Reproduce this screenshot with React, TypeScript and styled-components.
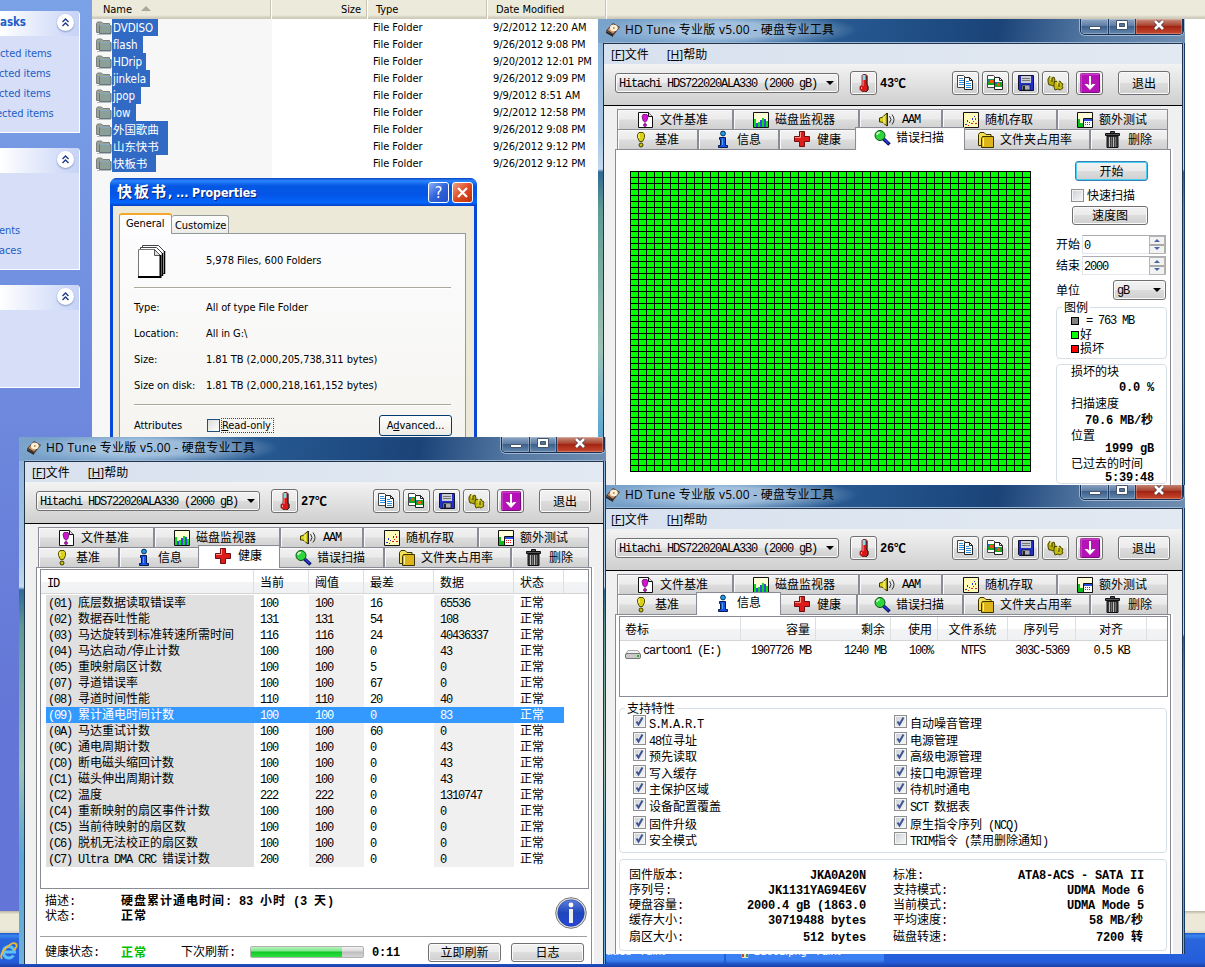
import React from "react";
import styled, { createGlobalStyle, css } from "styled-components";

const XP_FONT = `"DejaVu Sans Condensed", "Noto Sans", "Noto Sans CJK SC", sans-serif`;
const AERO_FONT = `"Open Sans", "Noto Sans CJK SC", sans-serif`;
const SONG_FONT = `"Liberation Mono", "Noto Sans CJK SC", monospace`;
const TAB_BORDER = "#898c95";
const GROUP_BORDER = "#d5dfe5";

const GlobalStyle = createGlobalStyle`
    body {
        margin: 0;
        background: #ffffff;
    }

    * {
        box-sizing: border-box;
    }
`;

const Desktop = styled.div`
    position: relative;
    width: 1205px;
    height: 967px;
    overflow: hidden;
    background: #ffffff;
    font-family: ${XP_FONT};
    font-size: 11px;
    letter-spacing: -0.07px;
    color: #000000;
    white-space: pre;
`;

/* ---------- mixed latin / chinese text ---------- */

const SongText = styled.span<{ $bold?: boolean }>`
    display: inline-block;
    font-family: "Noto Sans CJK SC", sans-serif;
    font-size: 12px;
    font-weight: ${(props) => (props.$bold ? 700 : 400)};
    letter-spacing: ${(props) => (props.$bold ? "1px" : "0")};
    white-space: pre;
    transform: translateY(-1px);
`;

// half-width glyphs take exactly half of a chinese one
const Latin = styled.span<{ $bold?: boolean }>`
    font-family: ${SONG_FONT};
    font-size: 12px;
    letter-spacing: ${(props) => (props.$bold ? "-0.2px" : "-1.2px")};
`;

const Song = ({ text, bold }: { text: string; bold?: boolean }) => (
    <SongText $bold={bold}>
        {text
            .split(/([\x20-\x7e]+)/)
            .filter(Boolean)
            .map((part, i) =>
                /^[\x20-\x7e]/.test(part) ? (
                    <Latin key={i} $bold={bold}>
                        {part}
                    </Latin>
                ) : (
                    <React.Fragment key={i}>{part}</React.Fragment>
                ),
            )}
    </SongText>
);

/* ---------- icons ---------- */

const Icon = styled.svg`
    display: block;
    flex: none;
    overflow: visible;
`;

const DiskIcon = () => (
    <Icon width="14" height="14" viewBox="0 0 14 14">
        <path d="M0 7.500 7 0l7 4-7 9z" fill="#4b3a32" />
        <path d="M1.500 7 7 1l6 3.500-6 6z" fill="#c99465" />
        <ellipse cx="7.800" cy="5" rx="3.800" ry="3.200" fill="#fff0d8" />
        <circle cx="7.800" cy="5" r="1" fill="#c08a58" />
        <path d="M0 8l7 4v2L0 10z" fill="#2e2622" />
    </Icon>
);

const FolderIcon = () => (
    <Icon width="16" height="14" viewBox="0 0 16 14">
        <path d="M.5 11.500v-9l1-1.500h4l1.500 1.500h6.500v9z" fill="#98a394" stroke="#7a8082" />
        <path d="M3.500 4.500h11.500v8h-11.500z" fill="#8c9f98" stroke="#64757f" />
        <path d="M4 4.500h10" stroke="#84a9c9" />
        <path d="M1 13.500h14" stroke="#b9bcc0" />
    </Icon>
);

const ThermoIcon = () => (
    <Icon width="10" height="18" viewBox="0 0 10 18">
        <path d="M3 1.500 4 .5h3l1 1v10l1 1v3l-2 2h-4l-2-2v-3l2-1z" fill="#d91818" stroke="#5a0909" strokeWidth=".7" />
        <path d="M3.500 1h3v5h-3z" fill="#7fe0ea" />
        <path d="M2.500 13v2M4 6v6" stroke="#ff9a9a" />
        <path d="M8 2v9l1 1v4l-2 2" fill="none" stroke="#222" />
    </Icon>
);

const CopyIcon = ({ color }: { color?: boolean }) => (
    <Icon width="17" height="16" viewBox="0 0 17 16">
        <path d="M.5.500h6l2 2v10h-8z" fill="#fff" stroke="#444" />
        <path d="M7.500 2.500h5l3 3v9h-8z" fill="#fff" stroke="#222" />
        <path d="M12.500 2.500v3h3" fill="none" stroke="#222" />
        {color ? (
            <>
                <path d="M1 4h6v6h-6zM8 7h7v5h-7z" fill="#12a422" />
                <path d="M3 5h3v3h-3zM10 8h3v3h-3z" fill="#f05a10" />
                <path d="M1 4h2v2h-2zM8 7h2v2h-2z" fill="#1d70d0" />
            </>
        ) : (
            <path d="M2 3.500h4M2 5.500h5M2 7.500h5M2 9.500h5M9 6.500h3M9 8.500h5M9 10.500h5M9 12.500h5" stroke="#2c8ede" />
        )}
    </Icon>
);

const SaveIcon = () => (
    <Icon width="16" height="16" viewBox="0 0 16 16">
        <path d="M.5.5h15v15h-14l-1-1z" fill="#2330d0" stroke="#111130" />
        <path d="M3 1h10v7h-10z" fill="#c9ccd2" />
        <path d="M4 3.500h8M4 5.500h8" stroke="#777" />
        <path d="M4 10h8v5h-8z" fill="#a9acb8" stroke="#111" strokeWidth=".7" />
        <path d="M5 11h2v4h-2z" fill="#222" />
    </Icon>
);

const GearsIcon = () => (
    <Icon width="17" height="16" viewBox="0 0 17 16">
        <path d="M1 4 3 1l2 2 2-1 1 3-1 3 2 1-3 2-2-1-2 0-1-3z" fill="#b5ad08" stroke="#4b4700" />
        <path d="M7 8l2-2 2 1 2-1 1 2 2 1-1 2 1 2-3 2-2-1-3 1-1-3z" fill="#c6bd12" stroke="#4b4700" />
        <path d="M4 1v4M11 6v4" stroke="#eee67a" strokeWidth="1.500" />
        <path d="M5 3v4M12 8v4" stroke="#3c3900" />
    </Icon>
);

const DownIcon = () => (
    <Icon width="20" height="20" viewBox="0 0 20 20">
        <rect x=".5" y=".5" width="19" height="19" rx="1" fill="#b512b5" stroke="#7a0b7d" />
        <path d="M1 19V1h18" fill="none" stroke="#dd62dd" />
        <path d="M10 3v11" stroke="#fff" strokeWidth="2" />
        <path d="M4.500 11h3l2.500 2 2.500-2h3l-5.500 6z" fill="#fff" />
    </Icon>
);

const BangIcon = () => (
    <Icon width="10" height="17" viewBox="0 0 10 17">
        <path d="M3 1.500h4l1.500 2v3l-2 4h-3l-2-4v-3z" fill="#d9d216" stroke="#545000" />
        <circle cx="5" cy="14" r="2" fill="#c9c20e" stroke="#3c3a00" />
        <path d="M3 3v4" stroke="#fffbb0" />
    </Icon>
);

const FileBangIcon = () => (
    <Icon width="15" height="16" viewBox="0 0 15 16">
        <path d="M.5.5h10l4 4v11h-14z" fill="#fff" stroke="#111" />
        <path d="M10.500.5v4h4" fill="#ddd" stroke="#111" />
        <path d="M5 2.500h4l1 2-1 4-2 2-2-2-1-4z" fill="#d414d4" stroke="#500050" strokeWidth=".7" />
        <circle cx="7" cy="13" r="1.500" fill="#d414d4" stroke="#500050" strokeWidth=".7" />
    </Icon>
);

const ChartIcon = () => (
    <Icon width="17" height="16" viewBox="0 0 17 16">
        <path d="M.5.5h15v15h-15z" fill="#ffffd8" stroke="#111" />
        <path d="M1 7h2v8h-2zM5 10h2v5h-2zM9 6h2v9h-2zM13 9h2v6h-2z" fill="#0bdc1a" />
        <path d="M3 11h2v4h-2zM7 8h2v7h-2zM11 7h2v8h-2z" fill="#3b46e0" />
    </Icon>
);

const SpeakerIcon = () => (
    <Icon width="17" height="16" viewBox="0 0 17 16">
        <path d="M.5 6 3 5.500 8 1v13l-5-4L.5 10z" fill="#dcd41a" stroke="#3c3a00" />
        <path d="M5 4v8" stroke="#fff9a0" />
        <path d="M8.500 1v13" stroke="#222" />
        <path d="M10.500 4q3 3.500 0 7M13 2.500q4 5 0 10" fill="none" stroke="#333" />
    </Icon>
);

const ScatterIcon = () => (
    <Icon width="17" height="16" viewBox="0 0 17 16">
        <path d="M.5.5h15v15h-15z" fill="#fffbb8" stroke="#111" />
        <path d="M2 12h2v1h-2zM4 8h1v2h-1zM6 10h1v1h-1zM9 6h1v2h-1zM11 4h1v1h-1z" fill="#2a35e0" />
        <path d="M5 13h1v1h-1zM8 11h2v1h-2zM10 9h1v1h-1zM12 6h1v2h-1zM12 11h2v1h-2z" fill="#e02020" />
    </Icon>
);

const ExtraIcon = () => (
    <Icon width="17" height="16" viewBox="0 0 17 16">
        <path d="M.5.5h15v15h-15z" fill="#ffffd8" stroke="#111" />
        <path d="M1 7h2v8h-2zM3 11h3v4h-3z" fill="#0bbc1a" />
        <path d="M6.500 6.500h9v9h-9z" fill="#fff" stroke="#111" />
        <path d="M7 7h8v2h-8z" fill="#2b4fe0" />
        <path d="M8 10h1v1h-1zM10 10h1v1h-1zM12 10h1v1h-1zM8 12h1v1h-1zM10 12h1v1h-1zM12 12h1v1h-1z" fill="#e02020" />
    </Icon>
);

const InfoIcon = () => (
    <Icon width="12" height="17" viewBox="0 0 12 17">
        <circle cx="6" cy="2.500" r="2.400" fill="#1b9bf0" stroke="#08304f" />
        <path d="M2.500 6.500h6v8h2v2h-9v-2h2v-6h-1z" fill="#1653e8" stroke="#071a50" />
        <path d="M5.500 8v6" stroke="#47a3ff" />
    </Icon>
);

const CrossIcon = () => (
    <Icon width="17" height="17" viewBox="0 0 17 17">
        <path d="M5.500.5h5v5h5v5h-5v5h-5v-5h-5v-5h5z" fill="#e01b1b" stroke="#6b1010" />
        <path d="M6.500 1v5.500h-5.500" fill="none" stroke="#ff9a8a" />
    </Icon>
);

const LensIcon = () => (
    <Icon width="17" height="16" viewBox="0 0 17 16">
        <path d="M9 8.500l6.500 6" stroke="#0b1470" strokeWidth="3.600" />
        <path d="M9 8l5.500 5.500" stroke="#2e44e0" strokeWidth="1.200" />
        <circle cx="6" cy="5.500" r="5" fill="#2fd53c" stroke="#0a4d10" />
        <path d="M3 5q0-2.500 3-2.500" stroke="#d0ffd0" strokeWidth="1.500" fill="none" />
    </Icon>
);

const YellowFolderIcon = () => (
    <Icon width="16" height="16" viewBox="0 0 16 16">
        <path d="M.5 13.500v-11l1.500-2h4l2 2h5v11z" fill="#f2e056" stroke="#3c3200" />
        <path d="M4.500 4.500h11v11h-12v-9z" fill="#dcb41c" stroke="#3c3200" />
        <path d="M5.500 6v8" stroke="#fff2a0" />
    </Icon>
);

const TrashIcon = () => (
    <Icon width="15" height="17" viewBox="0 0 15 17">
        <path d="M5.500.5h4v2h-4zM.5 2.500h14v2h-14z" fill="#555" stroke="#111" />
        <path d="M2 5h11v11.500h-11z" fill="#3d3d3d" stroke="#111" />
        <path d="M4.500 6v10M8.500 6v10" stroke="#bfbfbf" />
        <path d="M6.500 6v10M10.500 6v10" stroke="#777" />
    </Icon>
);

const DriveIcon = () => (
    <Icon width="16" height="9" viewBox="0 0 16 9">
        <path d="M3 .5h10l2.500 4h-15z" fill="#f1f1f1" stroke="#aaa" />
        <rect x=".5" y="3.500" width="15" height="5" rx="1.500" fill="#c9c9c9" stroke="#777" />
        <path d="M12 5h2v2h-2z" fill="#19b52a" />
    </Icon>
);

const PagesIcon = () => (
    <Icon width="28" height="33" viewBox="0 0 28 33">
        <path d="M4.500.5h16l6 6v22h-22z" fill="#fff" stroke="#444" />
        <path d="M26.500 6v23" stroke="#000" strokeWidth="1.500" />
        <path d="M2.500 2.500h16l6 6v22h-22z" fill="#fff" stroke="#444" />
        <path d="M24.500 8v23" stroke="#000" strokeWidth="1.500" />
        <path d="M.5 4.500h16l6 6v21h-22z" fill="#fff" stroke="#777" />
        <path d="M16.500 4.500v6h6z" fill="#ddd" stroke="#555" />
        <path d="M0 32h22.500v-22" fill="none" stroke="#000" strokeWidth="2" />
    </Icon>
);

const BigInfoIcon = () => (
    <Icon width="32" height="32" viewBox="0 0 32 32">
        <defs>
            <linearGradient id="bigInfo" x1="0" y1="0" x2="0" y2="1">
                <stop offset="0" stopColor="#5c7fdc" />
                <stop offset=".5" stopColor="#1e46bb" />
                <stop offset="1" stopColor="#2747d8" />
            </linearGradient>
        </defs>
        <circle cx="16" cy="16" r="15.300" fill="#e4e4e4" stroke="#777" />
        <circle cx="16" cy="16" r="13.300" fill="url(#bigInfo)" stroke="#1e3c9a" strokeWidth=".6" />
        <circle cx="16" cy="8" r="2.400" fill="#fff" />
        <path d="M14 12h4v14h-4z" fill="#eeeeee" />
    </Icon>
);

const IeIcon = () => (
    <Icon width="18" height="17" viewBox="0 0 18 17">
        <path d="M3 9h11.500a5.700 5.700 0 1 0-1 3.500" fill="none" stroke="#5cc2f8" strokeWidth="3" />
        <path d="M2 16Q-1 12 6 5T16 1q2 2-2 6" fill="none" stroke="#f0b92e" strokeWidth="1.800" />
    </Icon>
);

/* ---------- explorer ---------- */

const Sidebar = styled.aside`
    position: absolute;
    left: 0;
    top: 0;
    width: 92px;
    height: 911px;
    padding-top: 11px;
    display: flex;
    flex-direction: column;
    gap: 15px;
    background: linear-gradient(#7ba2e7, #6375d6 80%);
`;

const TaskPanel = styled.section<{ $height: number }>`
    width: 80px;
    height: ${(props) => props.$height}px;
    background: #d6dff7;
    border-right: 1px solid #ffffff;
    border-bottom: 1px solid #ffffff;
    border-top-right-radius: 4px;
    overflow: hidden;
`;

const TaskHeader = styled.header`
    height: 25px;
    display: flex;
    align-items: center;
    justify-content: space-between;
    padding: 0 5px 2px 0;
    background: linear-gradient(90deg, #ffffff, #c6d3f7);
    color: #215dc6;
    font-weight: 700;
    font-size: 11.500px;
    line-height: 27px;
`;

const Chevron = styled.span`
    width: 17px;
    height: 17px;
    border-radius: 50%;
    background: #ffffff;
    box-shadow: 0 1px 2px #8797c4;
    display: flex;
    align-items: center;
    justify-content: center;
`;

const TaskLinks = styled.div<{ $top: number }>`
    padding-top: ${(props) => props.$top}px;
    display: flex;
    flex-direction: column;
    color: #215dc6;
    line-height: 20px;
`;

const TaskLink = styled.span<{ $shift?: number }>`
    margin-left: ${(props) => props.$shift ?? 0}px;
`;

const FileList = styled.main`
    margin-left: 92px;
    height: 911px;
`;

const ColumnHeader = styled.div`
    display: flex;
    height: 19px;
    background: linear-gradient(#ebeadb 80%, #d6d2c2 90%, #cbc7b8);
    line-height: 19px;
`;

const HeaderCell = styled.div<{ $w: number; $right?: boolean; $pad?: number }>`
    width: ${(props) => props.$w}px;
    padding: 0 6px 0 ${(props) => props.$pad ?? 8}px;
    text-align: ${(props) => (props.$right ? "right" : "left")};
    border-right: 1px solid #ffffff;
    box-shadow: inset -1px 0 0 #c7c5b2;
`;

const SortArrow = styled.i`
    display: inline-block;
    margin: 0 0 2px 9px;
    border: 5px solid transparent;
    border-top: 0;
    border-bottom-color: #aca899;
`;

const SortedArea = styled.div`
    height: 420px;
    width: 100%;
    background: linear-gradient(90deg, #f7f7f7 180px, #ffffff 180px);
`;

const FileRow = styled.div`
    display: grid;
    grid-template-columns: 16px 261px 120px auto;
    height: 17px;
    line-height: 18px;
    padding-left: 4px;
`;

const FileName = styled.span<{ $w: number }>`
    width: ${(props) => props.$w}px;
    height: 17px;
    padding-left: 1px;
    background: #316ac5;
    color: #ffffff;
    font-size: 11.500px;
    overflow: hidden;
`;

const FolderSlot = styled.span`
    padding-top: 2px;
`;

const files = [
    { name: "DVDISO", w: 46, date: "9/2/2012 12:20 AM" },
    { name: "flash", w: 31, date: "9/26/2012 9:08 PM" },
    { name: "HDrip", w: 34, date: "9/20/2012 12:01 PM" },
    { name: "jinkela", w: 38, date: "9/26/2012 9:09 PM" },
    { name: "jpop", w: 29, date: "9/9/2012 8:51 AM" },
    { name: "low", w: 24, date: "9/2/2012 12:58 PM" },
    { name: "外国歌曲", w: 56, date: "9/26/2012 9:08 PM" },
    { name: "山东快书", w: 56, date: "9/26/2012 9:12 PM" },
    { name: "快板书", w: 44, date: "9/26/2012 9:12 PM" },
];

const ChevronMark = () => (
    <Chevron>
        <Icon width="9" height="9" viewBox="0 0 9 9">
            <path d="M1.500 4 4.500 1l3 3M1.500 8l3-3 3 3" fill="none" stroke="#1b3a8c" strokeWidth="1.400" />
        </Icon>
    </Chevron>
);

const Explorer = () => (
    <>
        <Sidebar>
            <TaskPanel $height={122}>
                <TaskHeader>
                    <span>asks</span>
                    <ChevronMark />
                </TaskHeader>
                <TaskLinks $top={8}>
                    <TaskLink>cted items</TaskLink>
                    <TaskLink $shift={-1}>cted items</TaskLink>
                    <TaskLink $shift={-1}>cted items</TaskLink>
                    <TaskLink $shift={-4}>ected items</TaskLink>
                </TaskLinks>
            </TaskPanel>
            <TaskPanel $height={122}>
                <TaskHeader>
                    <span />
                    <ChevronMark />
                </TaskHeader>
                <TaskLinks $top={48}>
                    <TaskLink $shift={-1}>ents</TaskLink>
                    <TaskLink $shift={-1}>aces</TaskLink>
                </TaskLinks>
            </TaskPanel>
            <TaskPanel $height={103}>
                <TaskHeader>
                    <span />
                    <ChevronMark />
                </TaskHeader>
            </TaskPanel>
        </Sidebar>
        <FileList>
            <ColumnHeader>
                <HeaderCell $w={180} $pad={11}>
                    Name
                    <SortArrow />
                </HeaderCell>
                <HeaderCell $w={96} $right>
                    Size
                </HeaderCell>
                <HeaderCell $w={120}>Type</HeaderCell>
                <HeaderCell $w={119}>Date Modified</HeaderCell>
            </ColumnHeader>
            <SortedArea>
                {files.map((file) => (
                    <FileRow key={file.name}>
                        <FolderSlot>
                            <FolderIcon />
                        </FolderSlot>
                        <FileName $w={file.w}>{file.name}</FileName>
                        <span>File Folder</span>
                        <span>{file.date}</span>
                    </FileRow>
                ))}
            </SortedArea>
        </FileList>
    </>
);

/* ---------- properties dialog ---------- */

const Dialog = styled.section`
    position: absolute;
    left: 110px;
    top: 178px;
    width: 367px;
    height: 280px;
    padding: 0 3px;
    background: #0a49d8;
    border-radius: 7px 7px 0 0;
    overflow: hidden;
`;

const DialogTitle = styled.header`
    height: 28px;
    margin: 0 -3px;
    padding: 0 4px 0 7px;
    display: flex;
    align-items: center;
    gap: 3px;
    background: linear-gradient(#0a45c0, #2b84ff 10%, #0458e2 28%, #0455e8 60%, #0566fb 88%, #0340c4);
    color: #ffffff;
    font-family: "DejaVu Sans Condensed", "Noto Sans CJK SC", sans-serif;
    font-size: 12.300px;
    font-weight: 700;
    text-shadow: 1px 1px 0 #0a1f6b;
`;

const DialogName = styled.span`
    flex: 1;
    line-height: 26px;
`;

const DialogCjk = styled.span`
    font-size: 15px;
    letter-spacing: 2px;
`;

const XpButton = styled.span<{ $close?: boolean }>`
    width: 21px;
    height: 21px;
    border: 1px solid #ffffff;
    border-radius: 3px;
    background: ${(props) =>
        props.$close ? "linear-gradient(135deg, #f0a088, #e04a22 50%, #b8310c)" : "linear-gradient(135deg, #8cb0f8, #2f62dc 50%, #2450c8)"};
    font-size: 16px;
    font-weight: 400;
    line-height: 19px;
    text-shadow: none;
    display: flex;
    justify-content: center;
    align-items: center;
`;

const DialogBody = styled.div`
    height: 260px;
    padding: 7px 8px 0 6px;
    background: #ece9d8;
`;

const DialogTabs = styled.div`
    display: flex;
    align-items: flex-end;
    height: 20px;
`;

const DialogTab = styled.div<{ $active?: boolean }>`
    border: 1px solid #919b9c;
    border-bottom: 0;
    border-radius: 3px 3px 0 0;
    ${(props) =>
        props.$active
            ? css`
                  width: 53px;
                  height: 21px;
                  margin-bottom: -1px;
                  z-index: 1;
                  border-top: 2px solid #f5a72b;
                  background: #fdfdfe;
                  line-height: 18px;
                  padding-left: 6px;
              `
            : css`
                  width: 57px;
                  height: 18px;
                  background: linear-gradient(#ffffff, #ecebe6);
                  line-height: 19px;
                  padding-left: 3px;
                  border-left: 0;
              `}
`;

const DialogPage = styled.div`
    height: 240px;
    padding: 11px 14px 0 14px;
    border: 1px solid #919b9c;
    background: linear-gradient(#fcfcfe, #f4f3ee);
`;

const SummaryRow = styled.div`
    display: flex;
    align-items: center;
    height: 42px;
    padding: 0 0 10px 4px;
`;

const SummaryText = styled.span`
    margin-left: 40px;
    line-height: 26px;
`;

const Separator = styled.div`
    height: 2px;
    border-top: 1px solid #aca899;
    border-bottom: 1px solid #ffffff;
`;

const PropRow = styled.div`
    display: grid;
    grid-template-columns: 72px auto;
    line-height: 26px;
`;

const PropTable = styled.div`
    padding: 6px 0 5px;
`;

const AttributeRow = styled.div`
    display: flex;
    align-items: center;
    height: 38px;
`;

const XpCheck = styled.span`
    width: 13px;
    height: 13px;
    margin-right: 2px;
    border: 1px solid #1c5180;
    background: linear-gradient(135deg, #dcdcd7, #ffffff);
`;

const AttributeLabel = styled.span`
    width: 73px;
`;

const FocusText = styled.span`
    width: 51px;
    line-height: 13px;
    outline: 1px dotted #444444;
`;

const AdvancedButton = styled.span`
    margin-left: auto;
    margin-right: -1px;
    width: 73px;
    height: 21px;
    border: 1px solid #003c74;
    border-radius: 3px;
    background: linear-gradient(#ffffff, #ecebe6);
    text-align: center;
    line-height: 19px;
`;

const PropertiesDialog = () => (
    <Dialog>
        <DialogTitle>
            <DialogName>
                <DialogCjk>快板书</DialogCjk>, ... Properties
            </DialogName>
            <XpButton>?</XpButton>
            <XpButton $close>
                <Icon width="11" height="11" viewBox="0 0 11 11">
                    <path d="M1 1l9 9M10 1l-9 9" stroke="#fff" strokeWidth="2.200" />
                </Icon>
            </XpButton>
        </DialogTitle>
        <DialogBody>
            <DialogTabs>
                <DialogTab $active>General</DialogTab>
                <DialogTab>Customize</DialogTab>
            </DialogTabs>
            <DialogPage>
                <SummaryRow>
                    <PagesIcon />
                    <SummaryText>5,978 Files, 600 Folders</SummaryText>
                </SummaryRow>
                <Separator />
                <PropTable>
                    <PropRow>
                        <span>Type:</span>
                        <span>All of type File Folder</span>
                    </PropRow>
                    <PropRow>
                        <span>Location:</span>
                        <span>All in G:\</span>
                    </PropRow>
                    <PropRow>
                        <span>Size:</span>
                        <span>1.81 TB (2,000,205,738,311 bytes)</span>
                    </PropRow>
                    <PropRow>
                        <span>Size on disk:</span>
                        <span>1.81 TB (2,000,218,161,152 bytes)</span>
                    </PropRow>
                </PropTable>
                <Separator />
                <AttributeRow>
                    <AttributeLabel>Attributes</AttributeLabel>
                    <XpCheck />
                    <FocusText>
                        <u>R</u>ead-only
                    </FocusText>
                    <AdvancedButton>
                        A<u>d</u>vanced...
                    </AdvancedButton>
                </AttributeRow>
            </DialogPage>
        </DialogBody>
    </Dialog>
);

/* ---------- HD Tune window chrome ---------- */

const Frame = styled.section<{ $x: number; $y: number; $h: number }>`
    position: absolute;
    left: ${(props) => props.$x}px;
    top: ${(props) => props.$y}px;
    width: 587px;
    height: ${(props) => props.$h}px;
    padding: 0 3px 0 6px;
    overflow: hidden;
    background: linear-gradient(#8fb6da 24px, #a9c8e6 120px, #c3d9ee 150px, #2f6a94 153px, #5f9a94 190px, #9cc3b4 330px, #5aa6d4 420px, #6fb0d8);
    box-shadow: inset -1px 0 0 #123a6b;
`;

const TitleBar = styled.header`
    display: flex;
    height: 24px;
    margin: 0 -3px 0 -6px;
    padding-left: 8px;
    background:
        radial-gradient(ellipse 130px 18px at 130px 11px, rgba(190, 214, 236, 0.75) 40%, transparent),
        linear-gradient(100deg, #7ba4cb, #5c8cbd 20%, #2c6199 30%, #1d4a80 60%, #1b4378 68%, #567aa4 84%, #6f8db0);
    font-family: ${AERO_FONT};
    font-size: 12px;
    letter-spacing: 0.25px;
    line-height: 22px;
`;

const TitleIcon = styled.span`
    width: 19px;
    padding-top: 4px;
`;

const TitleText = styled.span`
    flex: 1;
`;

const CaptionButtons = styled.div`
    display: flex;
    width: 104px;
    height: 16px;
    margin-right: 1px;
    border: 1px solid #172f52;
    border-top: 0;
    border-radius: 0 0 5px 5px;
    overflow: hidden;
    box-shadow: 0 0 0 1px rgba(210, 225, 240, 0.6);
`;

const CaptionButton = styled.span<{ $w: number; $close?: boolean }>`
    width: ${(props) => props.$w}px;
    display: flex;
    justify-content: center;
    padding-top: 1px;
    border-right: 1px solid #1f3a60;
    background: ${(props) =>
        props.$close ? "linear-gradient(#c9907f, #a8402c 45%, #a32412 50%, #c84a30)" : "linear-gradient(#8ea6c2, #5f7ea5 45%, #3d608d 50%, #6488ad)"};
    box-shadow: inset 0 0 0 1px rgba(255, 255, 255, 0.25);
`;

const Client = styled.div`
    border-top: 1px solid #22344c;
    box-shadow: -1px 0 0 #22344c, 1px 0 0 #22344c, 0 -1px 0 #9db8d4;
    background: #f0f0f0;
`;

const MenuBar = styled.nav`
    display: flex;
    gap: 18px;
    height: 20px;
    padding-left: 7px;
    background: linear-gradient(90deg, #d8e1ee, #e2e9f2);
    font-family: ${AERO_FONT};
    font-size: 12px;
    line-height: 21px;
`;

const ToolBar = styled.div`
    display: flex;
    height: 42px;
    padding: 7px 12px 0 11px;
    background: linear-gradient(#f3f3f3, #cfcfcf);
    border-bottom: 1px solid #000000;
`;

const buttonFace = css`
    border: 1px solid #707070;
    border-radius: 3px;
    background: linear-gradient(#f2f2f2, #ebebeb 48%, #dddddd 50%, #cfcfcf);
    box-shadow: inset 0 0 0 1px #fbfbfb;
`;

const Combo = styled.span<{ $w: number }>`
    ${buttonFace}
    display: flex;
    justify-content: space-between;
    align-items: center;
    width: ${(props) => props.$w}px;
    height: 20px;
    padding: 0 4px 0 3px;
`;

const DiskCombo = styled(Combo)`
    margin: 2px 11px 0 0;
`;

const Arrow = styled.i`
    border: 4px solid transparent;
    border-top-color: #000000;
    border-bottom: 0;
`;

const ToolButton = styled.span<{ $w?: number; $gap?: number }>`
    ${buttonFace}
    width: ${(props) => props.$w ?? 27}px;
    height: 24px;
    margin-right: ${(props) => props.$gap ?? 3}px;
    display: flex;
    align-items: center;
    justify-content: center;
`;

const Temperature = styled.span`
    flex: 1;
    line-height: 24px;
`;

const TempUnit = styled.b`
    font-family: "Noto Sans CJK SC", sans-serif;
    font-size: 12px;
    line-height: 20px;
    letter-spacing: 0;
`;

const TabRow = styled.div`
    display: flex;
    height: 20px;
    padding-left: 13px;
`;

const TabArea = styled.div`
    padding-top: 3px;
`;

const TabBox = styled.div<{ $w: number; $pad: number; $active?: boolean }>`
    display: flex;
    align-items: center;
    width: ${(props) => props.$w}px;
    height: 20px;
    padding-left: ${(props) => props.$pad}px;
    border: 1px solid ${TAB_BORDER};
    border-width: 1px 1px 0 1px;
    background: linear-gradient(#f2f2f2, #ebebeb 48%, #dddddd 52%, #d0d0d0);
    box-shadow: inset 1px 1px 0 #fafafa;
    line-height: 20px;
    ${(props) =>
        props.$active &&
        css`
            width: ${props.$w + 4}px;
            height: 23px;
            margin: -2px -2px 0 -2px;
            padding-left: ${props.$pad + 2}px;
            padding-bottom: 2px;
            background: #ffffff;
            z-index: 2;
        `}
`;

const TabIconSlot = styled.span<{ $w: number }>`
    width: ${(props) => props.$w}px;
    flex: none;
`;

const Page = styled.div<{ $h: number }>`
    width: 556px;
    height: ${(props) => props.$h}px;
    margin-left: 11px;
    border: 1px solid ${TAB_BORDER};
    border-bottom: 0;
    background: #ffffff;
    box-shadow: 2px 0 0 #ffffff;
`;

type TabDef = { id: string; label: string; w: number; pad: number; slot: number; icon: React.ReactNode };

const topTabs: TabDef[] = [
    { id: "fileBench", label: "文件基准", w: 116, pad: 20, slot: 22, icon: <FileBangIcon /> },
    { id: "monitor", label: "磁盘监视器", w: 126, pad: 19, slot: 22, icon: <ChartIcon /> },
    { id: "aam", label: "AAM", w: 83, pad: 19, slot: 23, icon: <SpeakerIcon /> },
    { id: "random", label: "随机存取", w: 115, pad: 20, slot: 22, icon: <ScatterIcon /> },
    { id: "extra", label: "额外测试", w: 111, pad: 19, slot: 22, icon: <ExtraIcon /> },
];

const bottomTabs: TabDef[] = [
    { id: "bench", label: "基准", w: 81, pad: 18, slot: 19, icon: <BangIcon /> },
    { id: "info", label: "信息", w: 81, pad: 18, slot: 20, icon: <InfoIcon /> },
    { id: "health", label: "健康", w: 78, pad: 14, slot: 23, icon: <CrossIcon /> },
    { id: "scan", label: "错误扫描", w: 106, pad: 16, slot: 22, icon: <LensIcon /> },
    { id: "folders", label: "文件夹占用率", w: 127, pad: 14, slot: 22, icon: <YellowFolderIcon /> },
    { id: "erase", label: "删除", w: 78, pad: 14, slot: 23, icon: <TrashIcon /> },
];

type WindowProps = {
    x: number;
    y: number;
    h: number;
    temp: string;
    active: string;
    children: React.ReactNode;
};

const HdTuneWindow = ({ x, y, h, temp, active, children }: WindowProps) => (
    <Frame $x={x} $y={y} $h={h}>
        <TitleBar>
            <TitleIcon>
                <DiskIcon />
            </TitleIcon>
            <TitleText>HD Tune 专业版 v5.00 - 硬盘专业工具</TitleText>
            <CaptionButtons>
                <CaptionButton $w={29}>
                    <Icon width="12" height="12" viewBox="0 0 12 12">
                        <path d="M.5 6.500h11v3h-11z" fill="#fff" stroke="#44556b" />
                    </Icon>
                </CaptionButton>
                <CaptionButton $w={27}>
                    <Icon width="12" height="11" viewBox="0 0 12 11">
                        <path d="M.5.5h11v9h-11z" fill="#fff" stroke="#44556b" />
                        <path d="M3.500 3.500h5v3h-5z" fill="#567399" stroke="#44556b" />
                    </Icon>
                </CaptionButton>
                <CaptionButton $w={48} $close>
                    <Icon width="12" height="11" viewBox="0 0 12 11">
                        <path d="M2 1l8 8M10 1l-8 8" stroke="#4c3a44" strokeWidth="4" />
                        <path d="M2 1l8 8M10 1l-8 8" stroke="#fff" strokeWidth="2.600" />
                    </Icon>
                </CaptionButton>
            </CaptionButtons>
        </TitleBar>
        <Client>
            <MenuBar>
                <span>
                    [<u>F</u>]文件
                </span>
                <span>
                    [<u>H</u>]帮助
                </span>
            </MenuBar>
            <ToolBar>
                <DiskCombo $w={224}>
                    <Song text="Hitachi HDS722020ALA330 (2000 gB)" />
                    <Arrow />
                </DiskCombo>
                <ToolButton>
                    <ThermoIcon />
                </ToolButton>
                <Temperature>
                    <Song text={temp} bold />
                    <TempUnit>℃</TempUnit>
                </Temperature>
                <ToolButton>
                    <CopyIcon />
                </ToolButton>
                <ToolButton>
                    <CopyIcon color />
                </ToolButton>
                <ToolButton>
                    <SaveIcon />
                </ToolButton>
                <ToolButton $gap={7}>
                    <GearsIcon />
                </ToolButton>
                <ToolButton $gap={15}>
                    <DownIcon />
                </ToolButton>
                <ToolButton $w={52} $gap={0}>
                    <Song text="退出" />
                </ToolButton>
            </ToolBar>
            <TabArea>
                {[topTabs, bottomTabs].map((row, i) => (
                    <TabRow key={i}>
                        {row.map((tab) => (
                            <TabBox key={tab.id} $w={tab.w} $pad={tab.pad} $active={tab.id === active}>
                                <TabIconSlot $w={tab.slot}>{tab.icon}</TabIconSlot>
                                <Song text={tab.label} />
                            </TabBox>
                        ))}
                    </TabRow>
                ))}
            </TabArea>
            <Page $h={h - 130}>{children}</Page>
        </Client>
    </Frame>
);

/* ---------- error scan page ---------- */

const ScanPage = styled.div`
    display: flex;
`;

// 50 x 50 blocks, each 8 x 6 including its black line
const BlockMap = styled.div`
    width: 401px;
    height: 301px;
    margin: 21px 25px 0 14px;
    background:
        repeating-linear-gradient(90deg, #000000 0 1px, transparent 1px 8px),
        repeating-linear-gradient(#000000 0 1px, #00ff00 1px 6px);
`;

const ScanSide = styled.div`
    width: 111px;
    display: flex;
    flex-direction: column;
`;

const PushButton = styled.span<{ $w: number; $h?: number; $m?: string; $focus?: boolean }>`
    ${buttonFace}
    display: flex;
    align-items: center;
    justify-content: center;
    flex: none;
    width: ${(props) => props.$w}px;
    height: ${(props) => props.$h ?? 19}px;
    margin: ${(props) => props.$m ?? "0"};
    ${(props) =>
        props.$focus &&
        css`
            border-color: #3c7fb1;
            box-shadow: inset 0 0 0 1px #48d0f4;
        `}
`;

const CheckRow = styled.div`
    display: flex;
    align-items: center;
    gap: 3px;
    height: 14px;
    margin: 7px 0 4px 15px;
`;

const CheckSquare = styled.span`
    width: 13px;
    height: 13px;
    flex: none;
    border: 1px solid #8e8f8f;
    background: linear-gradient(135deg, #c9ced4, #fafafa);
    box-shadow: inset 0 0 0 1px #f4f4f4;
`;

const FieldRow = styled.div<{ $top: number; $h?: number }>`
    display: flex;
    align-items: center;
    justify-content: space-between;
    height: ${(props) => props.$h ?? 19}px;
    margin-top: ${(props) => props.$top}px;
    padding-right: 1px;
`;

const NumberBox = styled.span`
    display: flex;
    justify-content: space-between;
    align-items: center;
    width: 84px;
    height: 19px;
    padding-left: 1px;
    border: 1px solid #abadb3;
    border-left-color: #e2e3ea;
    border-bottom-color: #e3e9ef;
`;

const Spinner = styled.span`
    display: grid;
    grid-template-rows: 8px 8px;
    width: 16px;
    justify-items: center;
    align-items: center;
    border: 1px solid #b5b5b5;
    background: linear-gradient(#f2f2f2 46%, #a9a9a9 46% 54%, #f2f2f2 54%);
`;

const SpinArrow = styled.i<{ $down?: boolean }>`
    border: 3px solid transparent;
    ${(props) => (props.$down ? "border-top-color: #4a64a8; border-bottom: 0;" : "border-bottom-color: #4a64a8; border-top: 0;")}
`;

const Group = styled.div<{ $h: number; $m: string }>`
    height: ${(props) => props.$h}px;
    margin: ${(props) => props.$m};
    border: 1px solid ${GROUP_BORDER};
    border-radius: 4px;
    flex: none;
`;

const GroupTitle = styled.div`
    width: fit-content;
    height: 14px;
    margin: -8px 0 0 5px;
    padding: 0 2px;
    line-height: 15px;
    background: #ffffff;
`;

const LegendItem = styled.div`
    display: flex;
    align-items: center;
    height: 14px;
    line-height: 14px;
    padding-left: 14px;
    gap: 1px;
`;

const Swatch = styled.i<{ $color: string }>`
    width: 8px;
    height: 8px;
    border: 1px solid #000000;
    background: ${(props) => props.$color};
`;

const ScanStats = styled.div`
    display: grid;
    grid-template-rows: 15px 17px 16px 16px 12px 16px 13px 14px;
    padding: 0 12px 0 14px;
    line-height: 14px;
`;

const StatValue = styled.span`
    text-align: right;
`;

const scanStats = [
    ["损坏的块", "0.0 %"],
    ["扫描速度", "70.6 MB/秒"],
    ["位置", "1999 gB"],
    ["已过去的时间", "5:39:48"],
];

const ErrorScan = () => (
    <ScanPage>
        <BlockMap />
        <ScanSide>
            <PushButton $w={73} $h={20} $m="11px 0 0 19px" $focus>
                <Song text="开始" />
            </PushButton>
            <CheckRow>
                <CheckSquare />
                <Song text="快速扫描" />
            </CheckRow>
            <PushButton $w={76} $m="0 0 0 16px">
                <Song text="速度图" />
            </PushButton>
            {[
                ["开始", "0", 10],
                ["结束", "2000", 2],
            ].map(([label, value, top]) => (
                <FieldRow key={label} $top={top as number}>
                    <Song text={label as string} />
                    <NumberBox>
                        <Song text={value as string} />
                        <Spinner>
                            <SpinArrow />
                            <SpinArrow $down />
                        </Spinner>
                    </NumberBox>
                </FieldRow>
            ))}
            <FieldRow $top={5} $h={20}>
                <Song text="单位" />
                <Combo $w={53}>
                    <Song text="gB" />
                    <Arrow />
                </Combo>
            </FieldRow>
            <Group $h={52} $m="7px 0 5px">
                <GroupTitle>
                    <Song text="图例" />
                </GroupTitle>
                <LegendItem>
                    <Swatch $color="#808080" />
                    <Song text=" = 763 MB" />
                </LegendItem>
                <LegendItem>
                    <Swatch $color="#00ff00" />
                    <Song text="好" />
                </LegendItem>
                <LegendItem>
                    <Swatch $color="#ff0000" />
                    <Song text="损坏" />
                </LegendItem>
            </Group>
            <Group $h={120} $m="0">
                <ScanStats>
                    {scanStats.map(([label, value]) => (
                        <React.Fragment key={label}>
                            <Song text={label} />
                            <StatValue>
                                <Song text={value} bold />
                            </StatValue>
                        </React.Fragment>
                    ))}
                </ScanStats>
            </Group>
        </ScanSide>
    </ScanPage>
);

/* ---------- info page ---------- */

const ListBox = styled.div<{ $h: number }>`
    width: 549px;
    height: ${(props) => props.$h}px;
    margin: 1px 0 0 3px;
    border: 1px solid ${TAB_BORDER};
    overflow: hidden;
`;

const ListHeader = styled.div<{ $cols: string }>`
    display: grid;
    grid-template-columns: ${(props) => props.$cols};
    height: 24px;
    line-height: 26px;
    background: linear-gradient(#ffffff 50%, #f3f4f6 52%, #f0f1f3);
    border-bottom: 1px solid #d5d5d5;
    overflow: hidden;
`;

const ListCell = styled.span<{ $align?: string; $line?: boolean }>`
    display: flex;
    align-items: center;
    padding: 0 5px;
    justify-content: ${(props) => props.$align ?? "flex-start"};
    ${(props) => props.$line && "border-right: 1px solid #dedfe1;"}
`;

const VolumeRow = styled.div<{ $cols: string }>`
    display: grid;
    grid-template-columns: ${(props) => props.$cols};
    height: 18px;
    line-height: 18px;
`;

const DriveSlot = styled.span`
    padding-top: 7px;
    margin-right: 2px;
`;

const volumeCols = "121px 75px 75px 47px 70px 68px 71px auto";
const volumeHeads: [string, string][] = [
    ["卷标", "flex-start"],
    ["容量", "flex-end"],
    ["剩余", "flex-end"],
    ["使用", "flex-end"],
    ["文件系统", "center"],
    ["序列号", "center"],
    ["对齐", "center"],
    ["", "center"],
];
const volumeValues = ["cartoon1 (E:)", "1907726 MB", "1240 MB", "100%", "NTFS", "303C-5369", "0.5 KB"];

const FeatureGrid = styled.div`
    display: grid;
    grid-auto-flow: column;
    grid-template-columns: 261px auto;
    grid-template-rows: 17px 16px 17px 16px 17px 18px 16px 16px;
    padding-left: 13px;
    line-height: 18px;
`;

const Feature = styled.div`
    display: flex;
    gap: 3px;
    height: 16px;
`;

const features = [
    "S.M.A.R.T",
    "48位寻址",
    "预先读取",
    "写入缓存",
    "主保护区域",
    "设备配置覆盖",
    "固件升级",
    "安全模式",
    "自动噪音管理",
    "电源管理",
    "高级电源管理",
    "接口电源管理",
    "待机时通电",
    "SCT 数据表",
    "原生指令序列 (NCQ)",
    "TRIM指令 (禁用删除通知)",
];

const DetailGrid = styled.div`
    display: grid;
    grid-template-columns: 114px 123px 27px 114px 137px;
    grid-template-rows: 15px 15px 15px 17px 15px;
    padding: 7px 0 0 9px;
    line-height: 15px;
`;

const DetailValue = styled.span`
    display: flex;
    justify-content: flex-end;
    margin-left: -20px;
`;

const details = [
    ["固件版本:", "JKA0A20N", "标准:", "ATA8-ACS - SATA II"],
    ["序列号:", "JK1131YAG94E6V", "支持模式:", "UDMA Mode 6"],
    ["硬盘容量:", "2000.4 gB (1863.0", "当前模式:", "UDMA Mode 5"],
    ["缓存大小:", "30719488 bytes", "平均速度:", "58 MB/秒"],
    ["扇区大小:", "512 bytes", "磁盘转速:", "7200 转"],
];

const FeatureCheck = ({ checked }: { checked: boolean }) => (
    <CheckSquare>
        {checked && (
            <Icon width="11" height="11" viewBox="0 0 11 11">
                <path d="M2.500 5.500l2 3 4-7" fill="none" stroke="#3f5592" strokeWidth="2" />
            </Icon>
        )}
    </CheckSquare>
);

const Info = () => (
    <>
        <ListBox $h={81}>
            <ListHeader $cols={volumeCols}>
                {volumeHeads.map(([label, align], i) => (
                    <ListCell key={i} $align={align} $line={i < 7}>
                        <Song text={label} />
                    </ListCell>
                ))}
            </ListHeader>
            <VolumeRow $cols={volumeCols}>
                {volumeValues.map((value, i) => (
                    <ListCell key={value} $align={volumeHeads[i][1]}>
                        {i === 0 && (
                            <DriveSlot>
                                <DriveIcon />
                            </DriveSlot>
                        )}
                        <Song text={value} />
                    </ListCell>
                ))}
            </VolumeRow>
        </ListBox>
        <Group $h={145} $m="11px 3px 6px">
            <GroupTitle>
                <Song text="支持特性" />
            </GroupTitle>
            <FeatureGrid>
                {features.map((name, i) => (
                    <Feature key={name}>
                        <FeatureCheck checked={i < 15} />
                        <Song text={name} />
                    </Feature>
                ))}
            </FeatureGrid>
        </Group>
        <Group $h={92} $m="0 3px">
            <DetailGrid>
                {details.map(([a, b, c, d]) => (
                    <React.Fragment key={a}>
                        <Song text={a} />
                        <DetailValue>
                            <Song text={b} bold />
                        </DetailValue>
                        <span />
                        <Song text={c} />
                        <DetailValue>
                            <Song text={d} bold />
                        </DetailValue>
                    </React.Fragment>
                ))}
            </DetailGrid>
        </Group>
    </>
);

/* ---------- health page ---------- */

const healthCols = "213px 55px 55px 70px 80px 50px auto";

const HealthRows = styled.div`
    width: 518px;
    margin: 1px 0 0 5px;
`;

const HealthRow = styled.div<{ $selected?: boolean }>`
    display: grid;
    grid-template-columns: 208px 55px 55px 70px 80px 50px;
    height: 16px;
    line-height: 16px;
    ${(props) =>
        props.$selected &&
        css`
            background: #3399ff;
            color: #ffffff;
        `}
`;

const HealthCell = styled.span<{ $pad: number; $bg?: string }>`
    padding-left: ${(props) => props.$pad}px;
    background: ${(props) => props.$bg ?? "none"};
    overflow: hidden;
`;

const HealthHeadCell = styled.span<{ $pad: number }>`
    padding-left: ${(props) => props.$pad}px;
    border-right: 1px solid #dedfe1;
`;

const Description = styled.div`
    display: grid;
    grid-template-columns: 76px 1fr 32px;
    grid-template-rows: 15px 15px;
    height: 48px;
    margin: 0 4px 0 3px;
    padding: 4px 0 0 5px;
    line-height: 15px;
    border-bottom: 1px solid #a0a0a0;
`;

const InfoMark = styled.span`
    grid-row: 1 / 3;
    grid-column: 3;
    padding-top: 4px;
`;

const StatusRow = styled.div`
    display: flex;
    align-items: center;
    height: 30px;
    padding-left: 8px;
`;

const StatusCell = styled.span<{ $w: number; $color?: string }>`
    width: ${(props) => props.$w}px;
    flex: none;
    color: ${(props) => props.$color ?? "#000000"};
`;

const Progress = styled.div`
    width: 114px;
    height: 12px;
    flex: none;
    margin-right: 8px;
    border: 1px solid #b2b2b2;
    border-radius: 2px;
    background: linear-gradient(#f3f3f3, #dcdcdc 40%, #bdbdbd 50%, #d6d6d6);
`;

const ProgressFill = styled.div`
    height: 100%;
    background: linear-gradient(#b5f3bd, #7ee88a 40%, #10c828 50%, #2ee03e);
`;

const healthHeads: [string, number][] = [
    ["ID", 6],
    ["当前", 6],
    ["阈值", 6],
    ["最差", 6],
    ["数据", 6],
    ["状态", 6],
];

const healthData = [
    ["(01) 底层数据读取错误率", "100", "100", "16", "65536"],
    ["(02) 数据吞吐性能", "131", "131", "54", "108"],
    ["(03) 马达旋转到标准转速所需时间", "116", "116", "24", "40436337"],
    ["(04) 马达启动/停止计数", "100", "100", "0", "43"],
    ["(05) 重映射扇区计数", "100", "100", "5", "0"],
    ["(07) 寻道错误率", "100", "100", "67", "0"],
    ["(08) 寻道时间性能", "110", "110", "20", "40"],
    ["(09) 累计通电时间计数", "100", "100", "0", "83"],
    ["(0A) 马达重试计数", "100", "100", "60", "0"],
    ["(0C) 通电周期计数", "100", "100", "0", "43"],
    ["(C0) 断电磁头缩回计数", "100", "100", "0", "43"],
    ["(C1) 磁头伸出周期计数", "100", "100", "0", "43"],
    ["(C2) 温度", "222", "222", "0", "1310747"],
    ["(C4) 重新映射的扇区事件计数", "100", "100", "0", "0"],
    ["(C5) 当前待映射的扇区数", "100", "100", "0", "0"],
    ["(C6) 脱机无法校正的扇区数", "100", "100", "0", "0"],
    ["(C7) Ultra DMA CRC 错误计数", "200", "200", "0", "0"],
];

const cellShade = ["#e0e0e0", undefined, "#f0f0f0", undefined, "#f0f0f0", undefined];
const SELECTED_ROW = 7;

const Health = () => (
    <>
        <ListBox $h={320}>
            <ListHeader $cols={healthCols}>
                {healthHeads.map(([label, pad]) => (
                    <HealthHeadCell key={label} $pad={pad}>
                        <Song text={label} />
                    </HealthHeadCell>
                ))}
            </ListHeader>
            <HealthRows>
                {healthData.map((row, i) => (
                    <HealthRow key={row[0]} $selected={i === SELECTED_ROW}>
                        {[...row, "正常"].map((value, col) => (
                            <HealthCell key={col} $pad={col === 0 ? 2 : 6} $bg={i === SELECTED_ROW ? undefined : cellShade[col]}>
                                <Song text={value} />
                            </HealthCell>
                        ))}
                    </HealthRow>
                ))}
            </HealthRows>
        </ListBox>
        <Description>
            <Song text="描述:" />
            <Song text="硬盘累计通电时间: 83 小时 (3 天)" bold />
            <InfoMark>
                <BigInfoIcon />
            </InfoMark>
            <Song text="状态:" />
            <Song text="正常" bold />
        </Description>
        <StatusRow>
            <StatusCell $w={76}>
                <Song text="健康状态:" />
            </StatusCell>
            <StatusCell $w={60} $color="#00c000">
                <Song text="正常" bold />
            </StatusCell>
            <StatusCell $w={69}>
                <Song text="下次刷新:" />
            </StatusCell>
            <Progress>
                <ProgressFill style={{ width: `${(11 / 13.500) * 100}%` }} />
            </Progress>
            <StatusCell $w={56}>
                <Song text="0:11" bold />
            </StatusCell>
            <PushButton $w={73} $m="0 10px 0 0">
                <Song text="立即刷新" />
            </PushButton>
            <PushButton $w={73}>
                <Song text="日志" />
            </PushButton>
        </StatusRow>
    </>
);

/* ---------- task bar ---------- */

const BottomBar = styled.footer`
    position: absolute;
    left: 0;
    top: 911px;
    width: 1205px;
    height: 56px;
`;

const StatusStrip = styled.div`
    height: 22px;
    background: linear-gradient(#b9b5a2, #ece9d8 15%, #ece9d8 85%, #d5d1bf);
`;

const TaskBar = styled.div`
    display: flex;
    height: 34px;
    gap: 2px;
    background: linear-gradient(#1f55c8, #3b87f0 8%, #2a66dc 18%, #245ddb 85%, #1941a5);
`;

const QuickLaunch = styled.div`
    width: 604px;
    padding-top: 10px;
`;

const TaskButton = styled.div<{ $w: number; $pad: number }>`
    display: flex;
    align-items: center;
    gap: 4px;
    width: ${(props) => props.$w}px;
    height: 30px;
    padding: 7px 0 0 ${(props) => props.$pad}px;
    border-radius: 2px;
    background: linear-gradient(#5ea0fb, #3c81f3 20%, #3c81f3 90%, #2a62d0);
    color: #ffffff;
`;

const PaintIcon = () => (
    <Icon width="10" height="14" viewBox="0 0 10 14">
        <path d="M1 5h8l-1 8h-6z" fill="#e8e2c8" />
        <path d="M2 12V5h2v7z" fill="#c8482a" />
        <path d="M6 12V5h2v7z" fill="#3b9a48" />
    </Icon>
);

const App = () => (
    <Desktop>
        <GlobalStyle />
        <Explorer />
        <BottomBar>
            <StatusStrip />
            <TaskBar>
                <QuickLaunch>
                    <IeIcon />
                </QuickLaunch>
                <TaskButton $w={118} $pad={0}>
                    titled - Paint
                </TaskButton>
                <TaskButton $w={158} $pad={14}>
                    <PaintIcon />
                    21661.png - Paint
                </TaskButton>
            </TaskBar>
        </BottomBar>
        <PropertiesDialog />
        <HdTuneWindow x={598} y={484} h={470} temp="26" active="info">
            <Info />
        </HdTuneWindow>
        <HdTuneWindow x={598} y={19} h={466} temp="43" active="scan">
            <ErrorScan />
        </HdTuneWindow>
        <HdTuneWindow x={19} y={437} h={527} temp="27" active="health">
            <Health />
        </HdTuneWindow>
    </Desktop>
);

export default App;
